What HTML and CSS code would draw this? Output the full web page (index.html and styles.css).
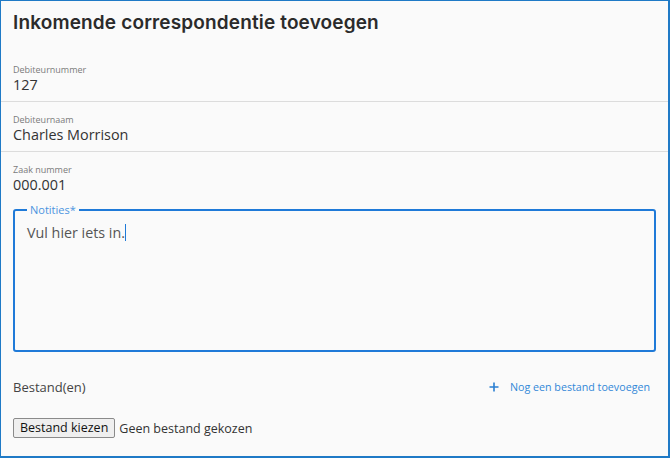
FILE: index.html
```html
<!DOCTYPE html>
<html lang="nl">
<head>
<meta charset="utf-8">
<link rel="stylesheet" href="styles.css">
</head>
<body>
<div class="frame">
  <h1 class="title">Inkomende correspondentie toevoegen</h1>
  <div class="fields">
    <div class="field">
      <div class="field-label">Debiteurnummer</div>
      <div class="field-value">127</div>
    </div>
    <div class="field">
      <div class="field-label">Debiteurnaam</div>
      <div class="field-value">Charles Morrison</div>
    </div>
    <div class="field field-last">
      <div class="field-label">Zaak nummer</div>
      <div class="field-value">000.001</div>
    </div>
  </div>
  <fieldset class="notes">
    <legend class="notes-legend">Notities*</legend>
    <div class="notes-text">Vul hier iets in.<span class="caret"></span></div>
  </fieldset>
  <div class="files-row">
    <span class="files-label">Bestand(en)</span>
    <a class="add-file" href="#">
      <svg class="plus" width="10" height="10" viewBox="0 0 10 10"><path d="M5 0.5V9.5M0.5 5H9.5" stroke="currentColor" stroke-width="1.6" fill="none"/></svg>
      <span>Nog een bestand toevoegen</span>
    </a>
  </div>
  <div class="file-input">
    <span class="file-button">Bestand kiezen</span>
    <span class="file-status">Geen bestand gekozen</span>
  </div>
</div>
</body>
</html>
```

FILE: styles.css
```css
html, body {
  margin: 0;
  padding: 0;
  background: #fafafa;
}

.frame {
  box-sizing: border-box;
  width: 670px;
  height: 458px;
  border-style: solid;
  border-color: #1f7ac6;
  border-width: 1px 2px 2px 1px;
  background: #fafafa;
  display: flex;
  flex-direction: column;
  font-family: "Open Sans", sans-serif;
  color: #333;
}

.title {
  margin: 0;
  padding: 9px 12px 0;
  font-family: Inter, "Open Sans", sans-serif;
  font-weight: 600;
  font-size: 19px;
  letter-spacing: 0.15px;
  line-height: 26px;
  color: #2b2b2b;
}

.fields {
  margin-top: 16px;
  display: flex;
  flex-direction: column;
}

.field {
  padding: 0 12px 4px;
  border-bottom: 1px solid #dcdcdc;
  height: 50px;
  box-sizing: border-box;
  padding-top: 12px;
}

.field-last {
  border-bottom: none;
}

.field-label {
  font-size: 9px;
  line-height: 11px;
  color: #7a7a7a;
}

.field-value {
  font-size: 14.4px;
  line-height: 20px;
  color: #333;
}

.notes {
  margin: 2px 12px 0;
  padding: 7px 12px;
  height: 148px;
  box-sizing: border-box;
  border: 2px solid #1f7ad8;
  border-radius: 3px;
}

.notes-legend {
  padding: 0 3px;
  margin-left: 0;
  font-size: 11px;
  line-height: 12px;
  color: #4a94e0;
}

.notes-text {
  font-size: 14.3px;
  line-height: 20px;
  color: #555;
}

.caret {
  display: inline-block;
  width: 1px;
  height: 17px;
  background: #1f7ad8;
  vertical-align: -3px;
}

.files-row {
  display: flex;
  justify-content: space-between;
  align-items: center;
  padding: 0 18px 0 12px;
  margin-top: 26px;
}

.files-label {
  font-size: 13px;
  color: #444;
}

.add-file {
  display: flex;
  align-items: center;
  gap: 11px;
  font-size: 10.7px;
  color: #3288d8;
  text-decoration: none;
}

.plus {
  color: #2a7fd2;
}

.file-input {
  display: flex;
  align-items: center;
  gap: 4px;
  padding: 0 12px;
  margin-top: 22px;
}

.file-button {
  box-sizing: border-box;
  height: 20px;
  padding: 0 6px;
  border: 1px solid #8a8a8a;
  border-radius: 2px;
  background: #efefef;
  font-size: 12.5px;
  line-height: 18px;
  color: #111;
}

.file-status {
  font-size: 12.5px;
  color: #333;
}
```
